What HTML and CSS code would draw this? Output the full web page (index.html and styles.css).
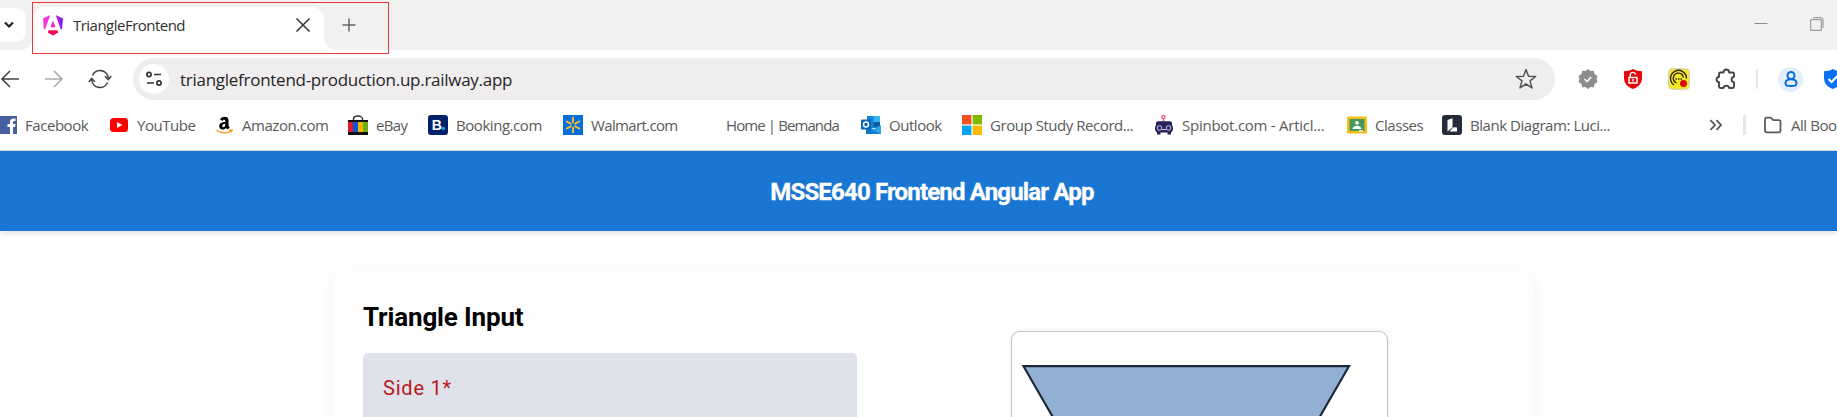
FILE: index.html
```html
<!DOCTYPE html>
<html lang="en">
<head>
<meta charset="utf-8">
<title>TriangleFrontend</title>
<link rel="stylesheet" href="styles.css">
</head>
<body>
<div class="browser">
  <div class="tabstrip">
    <div class="tab-search"><svg width="12" height="8" viewBox="0 0 12 8"><path d="M2 1.5l4 4 4-4" fill="none" stroke="#1f1f1f" stroke-width="2.2"/></svg></div>
    <div class="tab">
      <svg class="tab-icon" width="20" height="21" viewBox="0 0 20 21">
        <defs><linearGradient id="ng" x1="0" y1="0" x2="1" y2="0"><stop offset="0" stop-color="#f53be0"/><stop offset=".5" stop-color="#e92cc0"/><stop offset="1" stop-color="#7a14f5"/></linearGradient></defs>
        <path d="M0 3.500L7.300 0 2 14.500.8 14zM12.700 0L20 3.500 19 14l-1.200.5z" fill="url(#ng)"/>
        <path d="M10 5.500l2.600 6.700H7.400z" fill="#f22bb5"/>
        <path d="M5.700 15.300h8.600l1 2.200L10 20.500l-5.300-3z" fill="#f20a55"/>
      </svg>
      <span class="tab-title">TriangleFrontend</span>
      <svg class="tab-close" width="16" height="16" viewBox="0 0 16 16"><path d="M1.500 1.500l13 13m0-13l-13 13" stroke="#333" stroke-width="1.500"/></svg>
    </div>
    <svg class="new-tab" width="14" height="14" viewBox="0 0 14 14"><path d="M7 .5v13M.5 7h13" stroke="#666" stroke-width="1.500"/></svg>
    <div class="window-buttons">
      <svg width="14" height="14" viewBox="0 0 14 14"><path d="M.5 6.500h13" stroke="#8c8c8c"/></svg>
      <svg width="14" height="14" viewBox="0 0 14 14"><path d="M.7 2.700h10.600v10.600H.7zM3 .7h8a2 2 0 0 1 2 2V11" fill="none" stroke="#8c8c8c"/></svg>
    </div>
    <div class="highlight"></div>
  </div>

  <div class="toolbar">
    <div class="nav">
      <svg width="20" height="18" viewBox="0 0 20 18"><path d="M10 1L2 9l8 8M2 9h17" fill="none" stroke="#444" stroke-width="1.600"/></svg>
      <svg width="20" height="18" viewBox="0 0 20 18"><path d="M10 1l8 8-8 8M18 9H1" fill="none" stroke="#aaa" stroke-width="1.600"/></svg>
      <svg width="24" height="20" viewBox="0 0 24 20"><path d="M4.500 6.500A8.200 8.200 0 0 1 20.200 9M19.500 13.500A8.200 8.200 0 0 1 3.800 11" fill="none" stroke="#444" stroke-width="1.600"/><path d="M17 7.200l3.300 3.300L23.200 7M7 12.800L3.700 9.500.8 13" fill="none" stroke="#444" stroke-width="1.600"/></svg>
    </div>
    <div class="omnibox">
      <div class="site-info"><svg width="16" height="16" viewBox="0 0 16 16" fill="none" stroke="#333" stroke-width="1.700"><circle cx="3" cy="3.500" r="2.100"/><path d="M8 3.500h7M1 12h7"/><circle cx="13" cy="12" r="2.100"/></svg></div>
      <span class="url">trianglefrontend-production.up.railway.app</span>
      <svg class="star" width="22" height="22" viewBox="0 0 22 22"><path d="M11 1.500l2.500 6.700 7.200.3-5.700 4.400 2 7L11 16l-6 3.900 2-7L1.300 8.500l7.200-.3z" fill="none" stroke="#555" stroke-width="1.500" stroke-linejoin="round"/></svg>
    </div>
    <div class="extensions">
      <svg width="20" height="20" viewBox="0 0 20 20"><path d="M10 0l2.500 2 3.200-.2.900 3.100L19.500 7l-1 3 1 3-2.900 2.100-.9 3.100-3.200-.2L10 20l-2.500-2-3.200.2-.9-3.100L.5 13l1-3-1-3 2.900-2.100.9-3.100 3.200.2z" fill="#8d8d8d"/><path d="M6.500 10l2.500 2.500 4.300-4.500" fill="none" stroke="#fff" stroke-width="1.600"/></svg>
      <svg width="20" height="20" viewBox="0 0 20 20"><path d="M10 0c3 1.800 5.500 2.200 9 2.200V9c0 6-4 9-9 11-5-2-9-5-9-11V2.200C4.500 2.200 7 1.800 10 0z" fill="#e20808"/><path d="M6 8.500h8v5.500H6zM7.200 8V6a2.800 2.800 0 0 1 5.500-.5M10 10v2.500" fill="none" stroke="#fff" stroke-width="1.400"/></svg>
      <svg width="22" height="22" viewBox="0 0 22 22"><rect x=".7" y=".7" width="20.600" height="20.600" rx="3.500" fill="#f8ea20" stroke="#cfcfbf"/><path d="M6 17A8 8 0 1 1 18.500 10.500M8.500 14.800A5 5 0 1 1 15.300 9.500" fill="none" stroke="#262310" stroke-width="1.400"/><path d="M7.500 11h7" stroke="#262310" stroke-width="1.400" stroke-dasharray="1.500 1"/><circle cx="15.500" cy="15.500" r="3.500" fill="#dc0808"/></svg>
      <svg width="22" height="22" viewBox="0 0 22 22"><path d="M5.500 4.500H8.500C8.500 2.500 9.800 1.500 11.300 1.500s2.800 1 2.800 3H17.500q1.500 0 1.500 1.500V8.800C15.800 9.200 15.800 14 19 14.300V18.500q0 1.500-1.500 1.500H14.200C13.700 16.800 9 16.800 8.500 20H5.500Q4 20 4 18.500V14.300C.8 13.800.8 9.300 4 8.800V6Q4 4.500 5.500 4.500z" fill="none" stroke="#444" stroke-width="1.900" stroke-linejoin="round"/></svg>
    </div>
    <span class="divider"></span>
    <div class="profile"><svg width="14" height="16" viewBox="0 0 14 16" fill="none" stroke="#0a6ad8" stroke-width="2"><circle cx="7" cy="4.500" r="3.500"/><path d="M1.500 12c0-5 11-5 11 0 0 3-1.500 3-5.500 3s-5.500 0-5.500-3z"/></svg></div>
    <svg class="shield" width="20" height="20" viewBox="0 0 20 20"><path d="M10 0c3 1.800 5.500 2.200 9 2.200V9c0 6-4 9-9 11-5-2-9-5-9-11V2.200C4.500 2.200 7 1.800 10 0z" fill="#0b6ff2"/><path d="M5.500 10l3 3L15 6.500" fill="none" stroke="#fff" stroke-width="2"/></svg>
  </div>

  <div class="bookmarks">
    <div class="bookmark"><svg viewBox="0 0 20 20"><rect y="1" width="20" height="18" fill="#4460a0"/><path d="M13 19v-7H10.500V9H13V7c0-2.800 1.500-4 5.500-3.500V6c-2-.2-2.500.1-2.500 1.300V9h2.500l-.4 3H16v7z" fill="#fff"/></svg><span>Facebook</span></div>
    <div class="bookmark"><svg viewBox="0 0 20 20"><rect x="1" y="3" width="18" height="14" rx="3.500" fill="#f00"/><path d="M8 7l5.300 3L8 13z" fill="#fff"/></svg><span>YouTube</span></div>
    <div class="bookmark"><svg viewBox="0 0 20 20"><path d="M6 4.500C6.800 1 14.500.2 14.500 5v5c0 1 .4 1.700 1.200 2.600l-2 1.900-1.600-1.600C9.500 16 5.200 14.500 5.200 11.300c0-3.600 3.300-4.200 6.200-4.300 0-3-2.400-2.600-2.700-1zm5.400 4.300c-2 0-3.100.7-3.100 2.200 0 2 3.100 1.800 3.100-2.200z" fill="#000"/><path d="M2.500 15c4.500 3.500 10.500 3.700 14.500 1.200M15 15.300l3-.3-.8 2.500" fill="none" stroke="#f9a11b" stroke-width="1.500"/></svg><span>Amazon.com</span></div>
    <div class="bookmark"><svg viewBox="0 0 20 20"><path d="M5.500 6V4c0-4 9-4 9 0v2" fill="none" stroke="#333" stroke-width="1.400"/><path d="M0 5h20v3H0zM0 16h20v4H0z" fill="#111"/><path d="M0 7h5v10H0z" fill="#e21a2b"/><path d="M5 7h5v10H5z" fill="#0a55d8"/><path d="M10 7h5v10h-5z" fill="#f5b700"/><path d="M15 7h5v10h-5z" fill="#74ad10"/></svg><span class="tight">eBay</span></div>
    <div class="bookmark"><svg viewBox="0 0 20 20"><rect width="20" height="20" rx="3" fill="#03206b"/><text x="3.700" y="15.200" class="b-mark">B</text><circle cx="15.200" cy="13.500" r="1.700" fill="#21a5e8"/></svg><span>Booking.com</span></div>
    <div class="bookmark"><svg viewBox="0 0 20 20"><rect width="20" height="20" fill="#046fdc"/><path d="M10 2.800v4.500M10 12.700v4.500M3.800 6.500l4 2.200M12.200 11.300l4 2.200M3.800 13.500l4-2.200M12.200 8.700l4-2.200" stroke="#fcc02e" stroke-width="1.900" stroke-linecap="round"/></svg><span class="tight">Walmart.com</span></div>
    <div class="bookmark"><svg viewBox="0 0 20 20"></svg><span class="tighter">Home | Bemanda</span></div>
    <div class="bookmark"><svg viewBox="0 0 20 20"><path d="M6 1h13v12H6z" fill="#1683d8"/><path d="M12.500 1H19v6h-6.500z" fill="#35b4ee"/><path d="M12.500 7H19v5h-6.500z" fill="#0d5ba8"/><path d="M5 11l8 3 7-4v9H5z" fill="#29a5e8"/><path d="M5 12l15 7H5z" fill="#1478ce"/><rect y="4.500" width="10" height="10" rx="1" fill="#0a62bd"/><circle cx="5" cy="9.500" r="2.500" fill="none" stroke="#fff" stroke-width="1.500"/></svg><span>Outlook</span></div>
    <div class="bookmark"><svg viewBox="0 0 20 20"><path d="M0 0h9.400v9.400H0z" fill="#f35022"/><path d="M10.600 0H20v9.400h-9.400z" fill="#7fba00"/><path d="M0 10.600h9.400V20H0z" fill="#00a3f0"/><path d="M10.600 10.600H20V20h-9.400z" fill="#ffb900"/></svg><span>Group Study Record...</span></div>
    <div class="bookmark"><svg viewBox="0 0 20 20"><circle cx="9.500" cy="2" r="1.600" fill="none" stroke="#ee5675" stroke-width="1.200"/><path d="M9.500 3.500V7" stroke="#ee5675" stroke-width="1.300"/><rect x="2" y="6.300" width="16" height="6" rx="2" fill="#28235f"/><rect x="1" y="9.500" width="18" height="8" rx="3.700" fill="#28235f"/><path d="M3 16h3.500v3.500H3zM13.500 16H17v3.500h-3.500z" fill="#28235f"/><circle cx="5.500" cy="13" r="2.300" fill="none" stroke="#cac8e8"/><circle cx="14.500" cy="13" r="2.300" fill="none" stroke="#cac8e8"/><path d="M8 14.500h4" stroke="#cac8e8"/></svg><span class="loose">Spinbot.com - Articl...</span></div>
    <div class="bookmark"><svg viewBox="0 0 20 20"><rect y="1.500" width="20" height="17" rx="1.500" fill="#f9bd19"/><path d="M2.500 4h15v12h-15z" fill="#45975a"/><circle cx="10" cy="7.800" r="1.900" fill="#fff"/><path d="M5.500 14c0-4.500 9-4.500 9 0z" fill="#fff"/><path d="M12 15h4v1.500h-4z" fill="#e5e5e5"/></svg><span>Classes</span></div>
    <div class="bookmark"><svg viewBox="0 0 20 20"><rect width="20" height="20" rx="3" fill="#242c39"/><path d="M5.500 5l5-1.800v9.300l-5 4zM7.500 16.500l4-4.300 3.500.2v4.100z" fill="#fff"/></svg><span>Blank Diagram: Luci...</span></div>
    <div class="more"><svg width="14" height="12" viewBox="0 0 14 12"><path d="M1.500 1.200L6 6l-4.500 4.800M7.500 1.200L12 6l-4.500 4.800" fill="none" stroke="#555" stroke-width="1.800"/></svg></div>
    <span class="divider"></span>
    <div class="bookmark all"><svg viewBox="0 0 20 20"><path d="M2 4.500c0-1.200.6-1.800 1.800-1.800h4l2.500 2.500h5.500c1.300 0 1.700.7 1.700 1.800v8.500c0 1.200-.6 1.800-1.700 1.800h-12C2.600 17.300 2 16.700 2 15.500z" fill="none" stroke="#5a5a5a" stroke-width="1.800"/></svg><span>All Boo</span></div>
  </div>
</div>

<header class="app-header"><h1>MSSE640 Frontend Angular App</h1></header>
<main class="card">
  <section class="form">
    <h2>Triangle Input</h2>
    <div class="field"><label>Side 1*</label></div>
  </section>
  <section class="preview">
    <svg width="374" height="84" viewBox="0 0 374 84"><path d="M11.500 34.200h325.500L174.200 316z" fill="#93afd4" stroke="#172a3a" stroke-width="2.200"/></svg>
  </section>
</main>
</body>
</html>
```
FILE: styles.css
```css
* { box-sizing: border-box; }
body { display: flex; flex-direction: column; margin: 0; height: 417px; overflow: hidden; background: #fefefe; font-family: Roboto, sans-serif; }
svg { display: block; flex: none; }
.browser { flex: none; height: 151px; background: #fff; border-bottom: 1px solid #dcdcdc; overflow: hidden; font-family: "Open Sans", "Noto Sans", sans-serif; }
.tabstrip { position: relative; display: flex; height: 50px; background: #f1f1ef; }
.tab-search { width: 26px; height: 34px; margin-top: 8px; padding: 13px 0 0 3px; background: #fff; border-radius: 0 10px 10px 0; }
.tab { position: relative; display: flex; align-items: center; width: 291px; height: 43px; margin: 7px 0 0 7px; padding: 0 13px 7px 10px; background: #fff; border-radius: 12px 12px 0 0; }
.tab::before, .tab::after { content: ""; position: absolute; bottom: 0; width: 12px; height: 12px; }
.tab::before { left: -12px; background: radial-gradient(circle at 0 0, transparent 11.500px, #fff 12px); }
.tab::after { right: -12px; background: radial-gradient(circle at 100% 0, transparent 11.500px, #fff 12px); }
.tab-title { margin-left: 10px; font-size: 15px; letter-spacing: -.52px; color: #303030; white-space: nowrap; }
.tab-close { margin-left: auto; }
.new-tab { margin: 18px 0 0 18px; }
.window-buttons { display: flex; gap: 42px; margin: 17px 13px 0 auto; }
.highlight { position: absolute; left: 32px; top: 2px; width: 357px; height: 52px; border: 1.500px solid #e63a3a; z-index: 2; }
.toolbar { display: flex; align-items: center; height: 58px; }
.nav { flex: none; display: flex; align-items: center; gap: 24px; width: 133px; }
.omnibox { flex: none; display: flex; align-items: center; width: 1422px; height: 42px; padding: 0 18px 0 6px; background: #efedee; border-radius: 21px; }
.site-info { display: flex; align-items: center; justify-content: center; width: 30px; height: 30px; background: #fff; border-radius: 50%; }
.url { margin-left: 11px; font-size: 17px; letter-spacing: -.27px; color: #262626; white-space: nowrap; }
.star { margin-left: auto; }
.extensions { flex: none; display: flex; align-items: center; gap: 25px; margin-left: 23px; }
.divider { flex: none; width: 3px; height: 20px; background: #e6e6e6; border-radius: 1px; }
.extensions + .divider { margin: 0 20px 0 19px; width: 2px; }
.profile { flex: none; display: flex; align-items: center; justify-content: center; width: 25px; height: 25px; background: #e2eefb; border-radius: 50%; }
.shield { margin-left: 20px; }
.bookmarks { display: grid; grid-template-columns: 112px 105px 134px 80px 135px 135px 163px 101px 192px 193px 95px 267px 34px 20px 76px; align-items: center; height: 34px; margin-left: -3px; }
.bookmark { display: flex; align-items: center; gap: 8px; font-size: 15px; line-height: 18px; letter-spacing: -.45px; color: #5a5a5a; white-space: nowrap; }
.bookmark svg { width: 20px; height: 20px; }
.bookmark span { padding-bottom: 1px; }
.bookmark .tight { letter-spacing: -.65px; }
.bookmark .tighter { letter-spacing: -.9px; }
.bookmark .loose { letter-spacing: -.25px; }
.b-mark { font: bold 14px "Liberation Sans", sans-serif; fill: #fff; }
.app-header { flex: none; position: relative; display: flex; align-items: center; justify-content: center; height: 80px; padding: 2px 0 0 27px; background: #1976d2; box-shadow: 0 2px 6px rgba(0,0,0,.12); }
.app-header h1 { margin: 0; font-size: 24px; font-weight: 700; letter-spacing: -.83px; color: #fff; -webkit-text-stroke: .3px #fff; }
.card { flex: 1; display: flex; width: 1200px; margin: 40px 0 0 333px; padding: 31px 30px 0; background: #fefefe; border-radius: 14px 14px 0 0; box-shadow: 0 4px 14px rgba(0,0,0,.05); }
.form { display: flex; flex-direction: column; width: 494px; }
.form h2 { margin: 0 0 20px; font-size: 26px; line-height: 31px; font-weight: 700; letter-spacing: -.15px; color: #000; }
.field { flex: 1; padding: 23px 20px 0; background: #e0e2eb; border-radius: 5px 5px 0 0; }
.field label { font-size: 20px; line-height: 24px; letter-spacing: .8px; color: #ba1a1a; }
.preview { width: 377px; margin: 29px 0 0 154px; background: #fff; border: 1px solid #c4c4c4; border-bottom: 0; border-radius: 9px 9px 0 0; box-shadow: 0 0 5px rgba(0,0,0,.08); }
```
